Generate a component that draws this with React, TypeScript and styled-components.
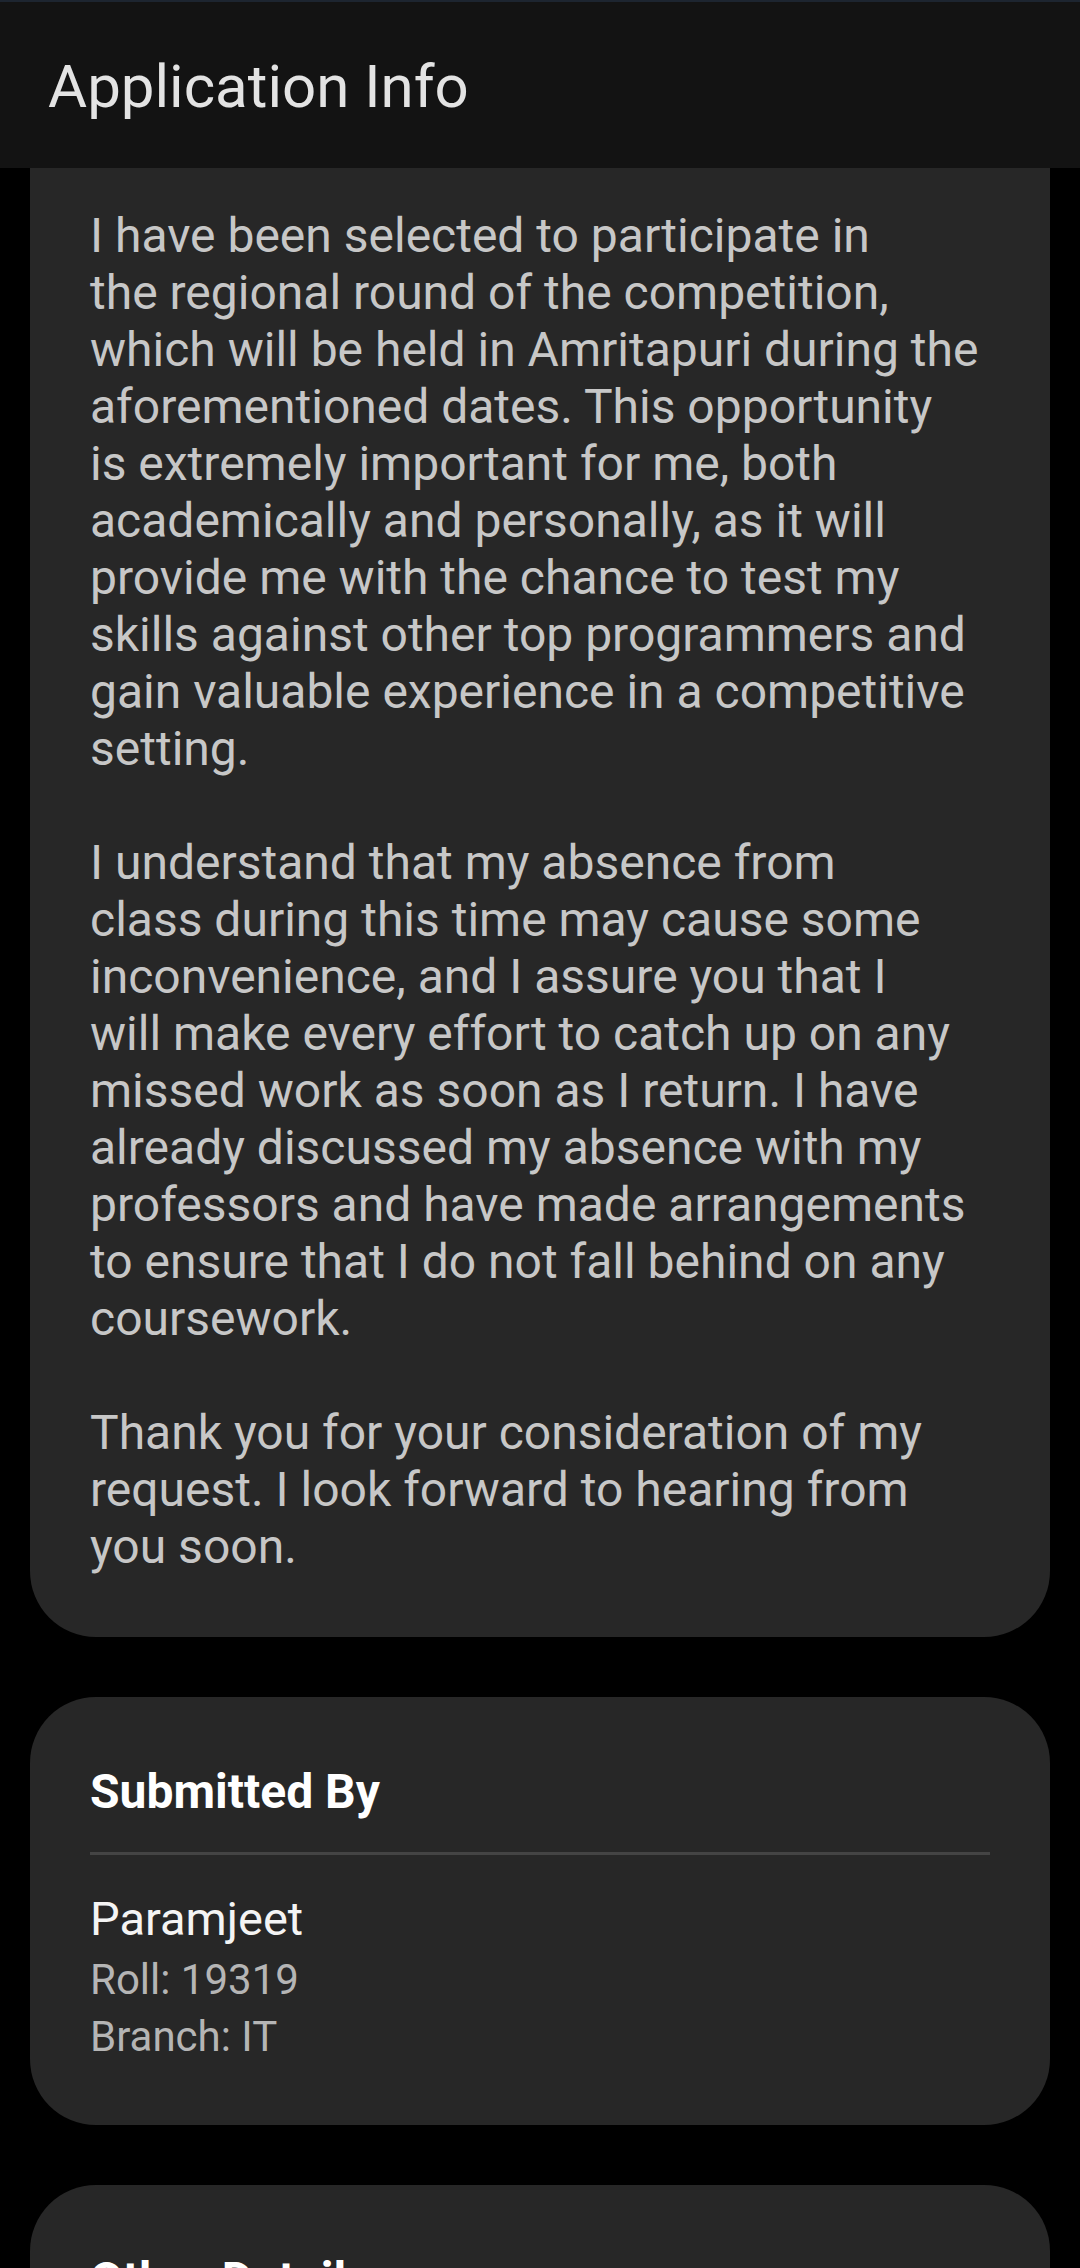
import styled, { createGlobalStyle } from "styled-components";

const GlobalStyle = createGlobalStyle`
    html, body {
        margin: 0;
        padding: 0;
        background: #000000;
    }
    body {
        font-family: Roboto, "Noto Sans", "Liberation Sans", sans-serif;
    }
`;

const Screen = styled.div`
    width: 1080px;
    height: 2268px;
    overflow: hidden;
    background: #000000;
    display: flex;
    flex-direction: column;
`;

const TopBar = styled.header`
    flex: none;
    height: 168px;
    box-sizing: border-box;
    padding: 52px 48px 0;
    background: #131313;
    border-top: 2px solid #1d2530;
`;

const Title = styled.h1`
    margin: -2px 0 0;
    font-size: 60px;
    line-height: 70px;
    font-weight: 400;
    color: #e3e3e3;
`;

const Feed = styled.main`
    display: flex;
    flex-direction: column;
    gap: 60px;
    padding: 0 30px;
`;

// the letter card is scrolled up under the top bar, so its top corners are hidden
const Card = styled.section<{ $cut?: boolean }>`
    background: #272727;
    border-radius: ${(p) => (p.$cut ? "0 0 66px 66px" : "66px")};
    padding: ${(p) => (p.$cut ? "39px 60px 62px" : "66px 60px 60px")};
`;

const Letter = styled.p`
    margin: 0;
    font-size: 48px;
    line-height: 57px;
    color: #c7c7c7;
    white-space: pre-line;
`;

const CardHeading = styled.h2`
    margin: 0;
    font-size: 48px;
    line-height: 57px;
    font-weight: 700;
    color: #ffffff;
`;

const Divider = styled.hr`
    margin: 32px 0 31px;
    border: none;
    height: 3px;
    background: #444444;
`;

const Name = styled.div`
    font-size: 47px;
    line-height: 65px;
    color: #f4f4f4;
`;

const Meta = styled.div`
    font-size: 42px;
    line-height: 57px;
    color: #b5b5b5;
`;

const letter = `I have been selected to participate in
the regional round of the competition,
which will be held in Amritapuri during the
aforementioned dates. This opportunity
is extremely important for me, both
academically and personally, as it will
provide me with the chance to test my
skills against other top programmers and
gain valuable experience in a competitive
setting.

I understand that my absence from
class during this time may cause some
inconvenience, and I assure you that I
will make every effort to catch up on any
missed work as soon as I return. I have
already discussed my absence with my
professors and have made arrangements
to ensure that I do not fall behind on any
coursework.

Thank you for your consideration of my
request. I look forward to hearing from
you soon.`;

export default function App() {
    return (
        <>
            <GlobalStyle />
            <Screen>
                <TopBar>
                    <Title>Application Info</Title>
                </TopBar>
                <Feed>
                    <Card $cut>
                        <Letter>{letter}</Letter>
                    </Card>
                    <Card>
                        <CardHeading>Submitted By</CardHeading>
                        <Divider />
                        <Name>Paramjeet</Name>
                        <Meta>Roll: 19319</Meta>
                        <Meta>Branch: IT</Meta>
                    </Card>
                    <Card>
                        <CardHeading>Other Details</CardHeading>
                        <Divider />
                        <Meta>Status: Pending</Meta>
                    </Card>
                </Feed>
            </Screen>
        </>
    );
}
